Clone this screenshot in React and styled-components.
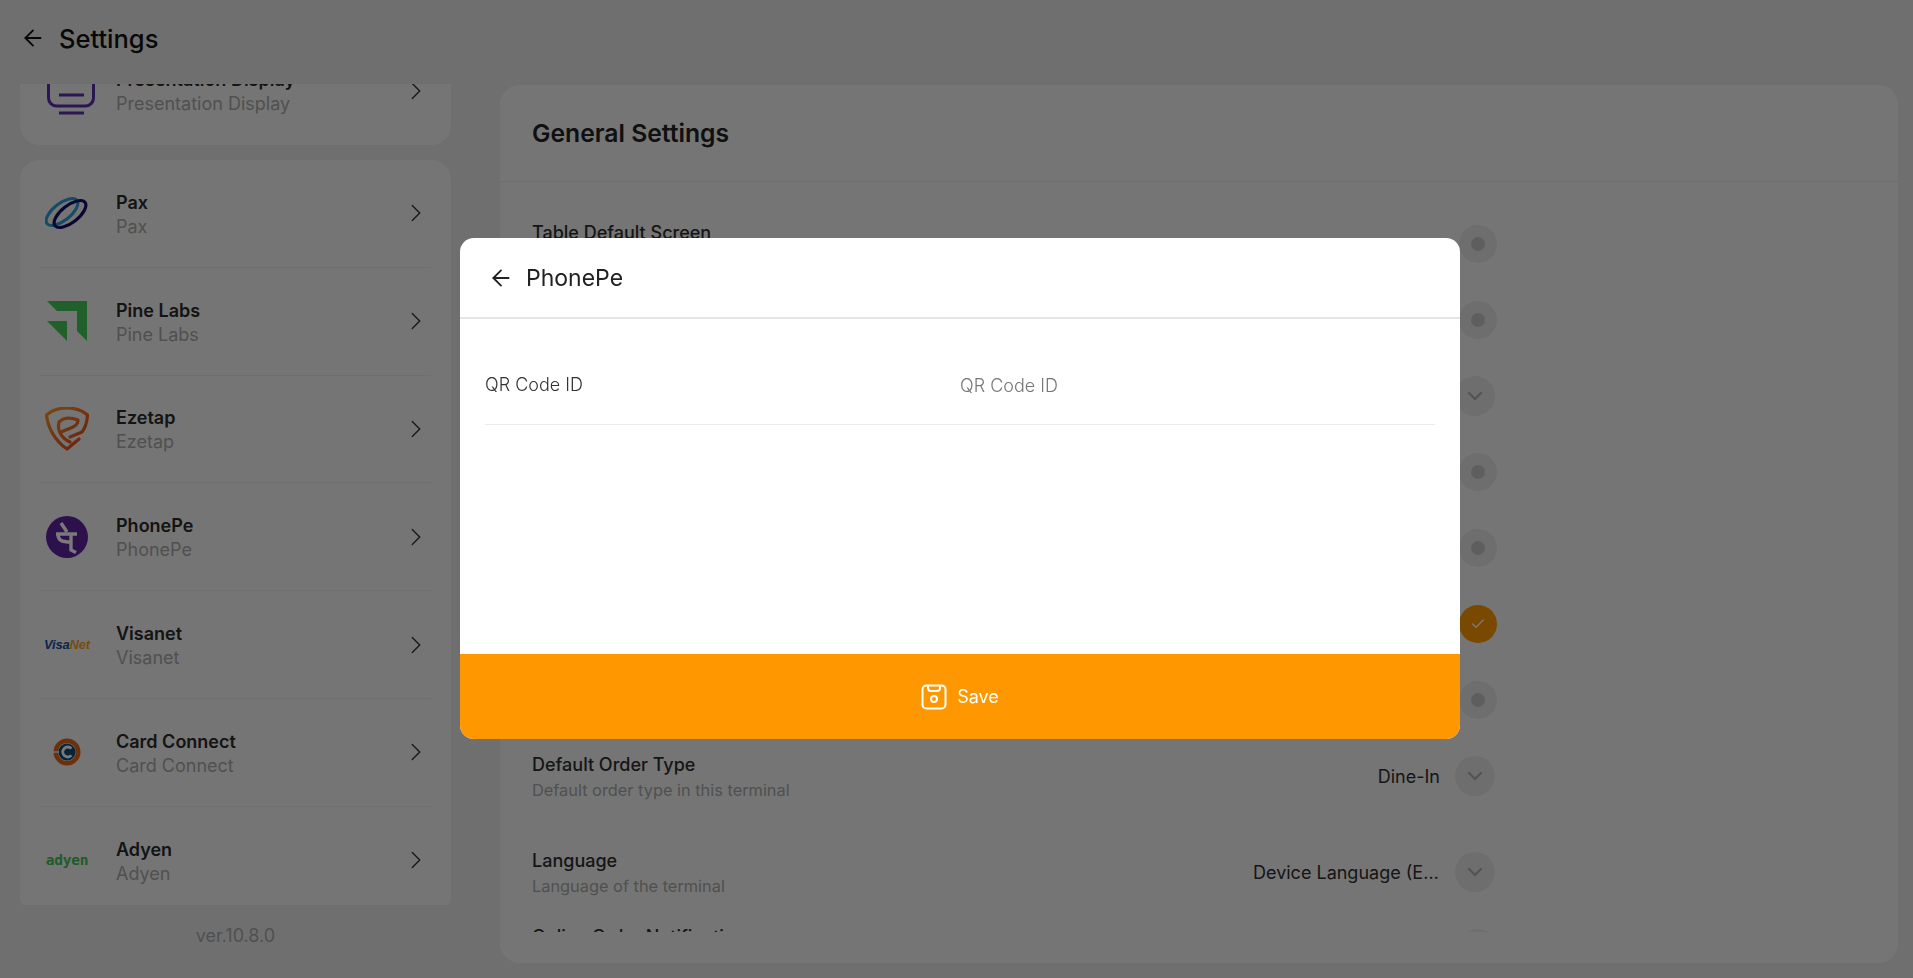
import styled, { createGlobalStyle } from "styled-components";
import { ArrowLeft, Check, ChevronDown, ChevronRight } from "lucide-react";

const GlobalStyle = createGlobalStyle`
  html, body {
    background: #e9e9e9;
    font-family: Inter, "Noto Sans", sans-serif;
    height: 100%;
    margin: 0;
    overflow: hidden;
  }
  * {
    box-sizing: border-box;
  }
`;

const Page = styled.div`
  display: flex;
  flex-direction: column;
  height: 978px;
`;

const TopBar = styled.header`
  align-items: center;
  color: #111;
  display: flex;
  flex-shrink: 0;
  gap: 13px;
  height: 84px;
  padding: 0 0 8px 20px;
`;

const PageTitle = styled.h1`
  font-size: 25.5px;
  font-weight: 500;
  margin: 0;
`;

const Body = styled.div`
  display: flex;
  flex: 1;
  min-height: 0;
`;

const Sidebar = styled.aside`
  display: flex;
  flex-direction: column;
  margin-left: 20px;
  width: 431px;
`;

const SidebarScroll = styled.div`
  height: 821px;
  overflow: hidden;
`;

const SidebarCard = styled.div`
  background: #f5f5f5;
  border-radius: 20px;
  margin-top: ${(props) => props.$top};
`;

const Item = styled.div`
  align-items: center;
  border-bottom: ${(props) => (props.$last ? "none" : "1px solid #e8e8e8")};
  color: #333;
  display: flex;
  height: 107.8px;
  margin: 0 20px;
  padding-left: 5px;
`;

const LogoSlot = styled.div`
  align-items: center;
  display: flex;
  flex-shrink: 0;
  height: 48px;
  justify-content: center;
  margin-right: 27px;
  width: 44px;
`;

const ItemText = styled.div`
  display: flex;
  flex: 1;
  flex-direction: column;
  gap: 3px;
  padding-top: 2px;
`;

const ItemTitle = styled.div`
  color: #2a2a2a;
  font-size: 18px;
  font-weight: 600;
  line-height: 21px;
`;

const ItemSub = styled.div`
  color: #a8a8a8;
  font-size: 18px;
  line-height: 21px;
`;

const Version = styled.div`
  align-items: center;
  color: #a8a8a8;
  display: flex;
  font-size: 18px;
  height: 60px;
  justify-content: center;
`;

const Panel = styled.main`
  background: #f5f5f5;
  border-radius: 20px;
  display: flex;
  flex-direction: column;
  height: 878px;
  margin: 1px 0 0 49px;
  width: 1398px;
`;

const PanelHead = styled.div`
  align-items: center;
  border-bottom: 1px solid #e6e6e6;
  display: flex;
  height: 97px;
  padding-left: 32px;
`;

const PanelTitle = styled.h2`
  color: #222;
  font-size: 24.7px;
  font-weight: 600;
  margin: 0;
`;

const SettingsList = styled.div`
  height: 750px;
  overflow: hidden;
  padding: 24px 401px 0 32px;
`;

const Row = styled.div`
  align-items: center;
  display: flex;
  height: 76px;
  justify-content: space-between;
  margin-top: ${(props) => props.$gap || "0"};
`;

const RowText = styled.div`
  display: flex;
  flex-direction: column;
  gap: 6px;
  padding-top: 3px;
`;

const RowTitle = styled.div`
  color: #2e2e2e;
  font-size: 18px;
  font-weight: 500;
  line-height: 20px;
`;

const RowSub = styled.div`
  color: #a8a8a8;
  font-size: 16.35px;
  line-height: 19px;
`;

const RowControl = styled.div`
  align-items: center;
  display: flex;
  gap: 15px;
`;

const RowValue = styled.div`
  color: #2e2e2e;
  font-size: 18px;
  max-width: 187px;
  overflow: hidden;
  text-overflow: ellipsis;
  white-space: nowrap;
`;

const Radio = styled.div`
  align-items: center;
  background: ${(props) => (props.$on ? "#ff9800" : "#e6e6e6")};
  border-radius: 50%;
  color: #fff;
  display: flex;
  height: 38px;
  justify-content: center;
  width: 38px;
`;

const RadioDot = styled.div`
  background: #c4c4c4;
  border-radius: 50%;
  height: 14px;
  width: 14px;
`;

const DropButton = styled.div`
  align-items: center;
  background: #e6e6e6;
  border-radius: 50%;
  color: #b0b0b0;
  display: flex;
  height: 40px;
  justify-content: center;
  margin-right: 2px;
  width: 40px;
`;

const Overlay = styled.div`
  align-items: center;
  background: rgba(0, 0, 0, 0.52);
  display: flex;
  inset: 0;
  justify-content: center;
  padding: 0 0 1px 7px;
  position: fixed;
`;

const Modal = styled.section`
  background: #fff;
  border-radius: 14px;
  display: flex;
  flex-direction: column;
  height: 501px;
  overflow: hidden;
  width: 1000px;
`;

const ModalHead = styled.div`
  align-items: center;
  border-bottom: 2px solid #e5e5e5;
  color: #222;
  display: flex;
  flex-shrink: 0;
  gap: 12px;
  height: 81px;
  padding-left: 28px;
`;

const ModalTitle = styled.div`
  font-size: 23px;
`;

const ModalBody = styled.div`
  flex: 1;
  padding: 0 25px;
`;

const FormRow = styled.label`
  border-bottom: 1px solid #ececec;
  display: grid;
  grid-template-columns: 1fr 1fr;
  height: 106px;
  padding-top: 55px;
`;

const FormLabel = styled.span`
  color: #333;
  font-size: 18px;
  font-weight: 300;
  line-height: 22px;
`;

const FormInput = styled.input`
  background: none;
  border: none;
  color: #333;
  font-family: inherit;
  font-size: 18px;
  font-weight: 300;
  height: 22px;
  outline: none;
  padding: 0;
  &::placeholder {
    color: #777;
    opacity: 1;
  }
`;

const SaveButton = styled.button`
  align-items: center;
  background: #ff9800;
  border: none;
  color: #fff;
  display: flex;
  flex-shrink: 0;
  font-family: inherit;
  font-size: 18px;
  font-weight: 400;
  gap: 10px;
  height: 85px;
  justify-content: center;
  padding: 0;
  width: 100%;
`;

function PresentationLogo() {
  return (
    <svg width="48" height="48" viewBox="0 0 48 48" fill="none" stroke="#5b2fb0" strokeWidth="3" style={{ marginLeft: 8, flexShrink: 0 }}>
      <path d="M1.5 4v27a8 8 0 0 0 8 8h29a8 8 0 0 0 8-8V4a4 4 0 0 0-4-4H5.5a4 4 0 0 0-4 4z" />
      <path d="M12 28h25M12 46h25" />
    </svg>
  );
}

function PaxLogo() {
  return (
    <svg width="44" height="36" viewBox="0 0 44 36" fill="none">
      <ellipse cx="17" cy="17" rx="19" ry="8.5" transform="rotate(-38 17 17)" stroke="#2a9ed8" strokeWidth="3" />
      <ellipse cx="25" cy="19" rx="19" ry="8.5" transform="rotate(-38 25 19)" stroke="#14106a" strokeWidth="3.2" />
    </svg>
  );
}

function PineLogo() {
  return (
    <svg width="40" height="40" viewBox="0 0 40 40" fill="#47c85a">
      <path d="M0 0h40v40L30 30V10H10z" />
      <path d="M0 20h20v20z" />
    </svg>
  );
}

function EzetapLogo() {
  return (
    <svg width="44" height="44" viewBox="5 4 44 44" fill="none" stroke="url(#eze)" strokeWidth="3.2" strokeLinecap="round" strokeLinejoin="round">
      <defs>
        <linearGradient id="eze" gradientUnits="userSpaceOnUse" x1="6" y1="5" x2="44" y2="46">
          <stop offset="0" stopColor="#f59a2c" />
          <stop offset="1" stopColor="#e6431c" />
        </linearGradient>
      </defs>
      <path d="M39 36L27 46C15 38 8 25 6.5 12 12 7 20 5 27 5s15 2 20.5 7c-.5 8-2.500 13-5.500 17L30 34" />
      <path d="M21 29L33 24c3-1.500 5-3.500 5-7-8-3-15-2-19 2-2 8 2 16 11 20" />
    </svg>
  );
}

function PhonePeLogo() {
  return (
    <svg width="42" height="42" viewBox="0 0 42 42">
      <circle cx="21" cy="21" r="21" fill="#5f259f" />
      <path d="M10 18h21M25 18v16l5 2.5M12 18c0 6 3 8 13 8" fill="none" stroke="#fff" strokeWidth="3.4" />
      <path d="M15 7l6 9" stroke="#fff" strokeWidth="3.4" />
    </svg>
  );
}

const VisaMark = styled.div`
  color: #1a4fa0;
  font-family: "Liberation Sans", sans-serif;
  font-size: 13px;
  font-style: italic;
  font-weight: 700;
  letter-spacing: -0.2px;
  white-space: nowrap;
`;

const VisaNetPart = styled.span`
  color: #f7a21a;
`;

function CardConnectLogo() {
  return (
    <svg width="28" height="28" viewBox="0 0 28 28">
      <circle cx="14" cy="14" r="11.3" fill="none" stroke="#e2641a" strokeWidth="4.4" />
      <circle cx="14" cy="14" r="8.6" fill="#0f4c78" />
      <path d="M0 14h6" stroke="#f5f5f5" strokeWidth="1.4" />
      <path d="M18.4 10.6a5 5 0 1 0 0 6.8" fill="none" stroke="#fff" strokeWidth="2.8" />
    </svg>
  );
}

const AdyenMark = styled.div`
  color: #3fbf52;
  font-family: "DejaVu Sans Mono", monospace;
  font-size: 14.5px;
  font-weight: 700;
  letter-spacing: -0.2px;
`;

function SaveIcon() {
  return (
    <svg width="26" height="26" viewBox="0 0 26 26" fill="none" stroke="#fff" strokeWidth="2" strokeLinejoin="round">
      <rect x="1.5" y="1.5" width="23" height="23" rx="4" />
      <path d="M7 1.5v2.5a3 3 0 0 0 3 3h6a3 3 0 0 0 3-3V1.5" />
      <circle cx="13" cy="15" r="3" />
    </svg>
  );
}

const gateways = [
  { name: "Pax", logo: <PaxLogo /> },
  { name: "Pine Labs", logo: <PineLogo /> },
  { name: "Ezetap", logo: <EzetapLogo /> },
  { name: "PhonePe", logo: <PhonePeLogo /> },
  { name: "Visanet", logo: <VisaMark>Visa<VisaNetPart>Net</VisaNetPart></VisaMark> },
  { name: "Card Connect", logo: <CardConnectLogo /> },
  { name: "Adyen", logo: <AdyenMark>adyen</AdyenMark> },
];

function SidebarItem({ name, logo, last }) {
  return (
    <Item $last={last}>
      <LogoSlot>{logo}</LogoSlot>
      <ItemText>
        <ItemTitle>{name}</ItemTitle>
        <ItemSub>{name}</ItemSub>
      </ItemText>
      <ChevronRight size={30} strokeWidth={1.1} />
    </Item>
  );
}

function RadioRow({ title, sub, on }) {
  return (
    <Row>
      <RowText>
        {title && <RowTitle>{title}</RowTitle>}
        {sub && <RowSub>{sub}</RowSub>}
      </RowText>
      <Radio $on={on}>{on ? <Check size={16} strokeWidth={2} /> : <RadioDot />}</Radio>
    </Row>
  );
}

function DropRow({ title, sub, value, gap }) {
  return (
    <Row $gap={gap}>
      <RowText>
        {title && <RowTitle>{title}</RowTitle>}
        {sub && <RowSub>{sub}</RowSub>}
      </RowText>
      <RowControl>
        {value && <RowValue>{value}</RowValue>}
        <DropButton>
          <ChevronDown size={24} strokeWidth={2.4} />
        </DropButton>
      </RowControl>
    </Row>
  );
}

export default function App() {
  return (
    <>
      <GlobalStyle />
      <Page>
        <TopBar>
          <ArrowLeft size={26} strokeWidth={1.7} />
          <PageTitle>Settings</PageTitle>
        </TopBar>
        <Body>
          <Sidebar>
            <SidebarScroll>
              <SidebarCard $top="-47px">
                <SidebarItem name="Presentation Display" logo={<PresentationLogo />} last />
              </SidebarCard>
              <SidebarCard $top="15.2px">
                {gateways.map((gateway) => (
                  <SidebarItem key={gateway.name} name={gateway.name} logo={gateway.logo} />
                ))}
              </SidebarCard>
            </SidebarScroll>
            <Version>ver.10.8.0</Version>
          </Sidebar>
          <Panel>
            <PanelHead>
              <PanelTitle>General Settings</PanelTitle>
            </PanelHead>
            <SettingsList>
              <RadioRow title="Table Default Screen" sub="Table default screen" />
              <RadioRow />
              <DropRow />
              <RadioRow />
              <RadioRow />
              <RadioRow on />
              <RadioRow />
              <DropRow title="Default Order Type" sub="Default order type in this terminal" value="Dine-In" />
              <DropRow title="Language" sub="Language of the terminal" value="Device Language (English)" gap="20px" />
              <RadioRow title="Online Order Notification" sub="Online order notification" />
            </SettingsList>
          </Panel>
        </Body>
      </Page>
      <Overlay>
        <Modal>
          <ModalHead>
            <ArrowLeft size={26} strokeWidth={1.7} />
            <ModalTitle>PhonePe</ModalTitle>
          </ModalHead>
          <ModalBody>
            <FormRow>
              <FormLabel>QR Code ID</FormLabel>
              <FormInput placeholder="QR Code ID" />
            </FormRow>
          </ModalBody>
          <SaveButton>
            <SaveIcon />
            Save
          </SaveButton>
        </Modal>
      </Overlay>
    </>
  );
}
